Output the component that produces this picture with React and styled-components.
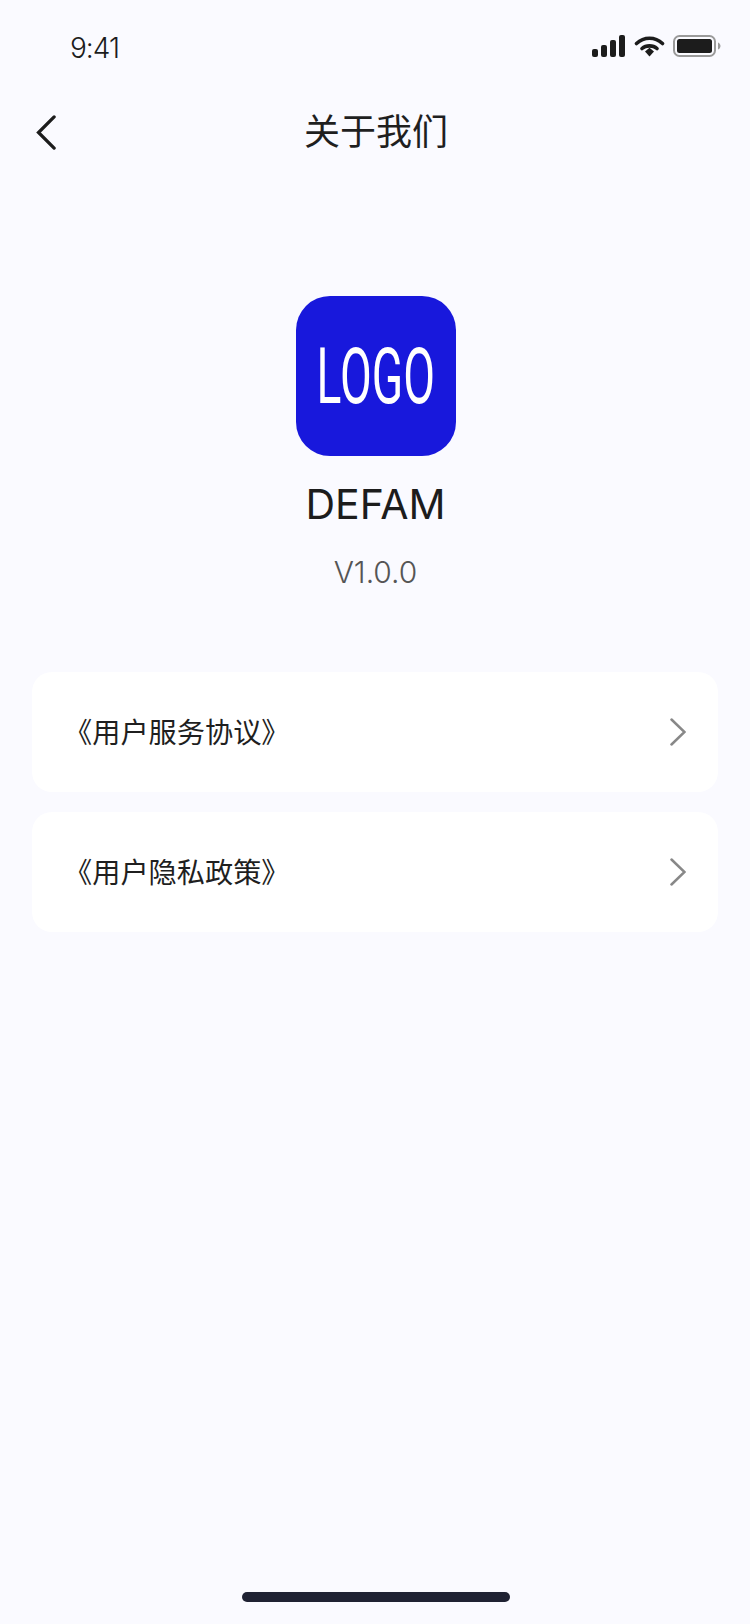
import React from 'react';
import styled, { createGlobalStyle } from 'styled-components';

const GlobalStyle = createGlobalStyle`
  html, body {
    margin: 0;
    padding: 0;
    background: #fafaff;
  }
  * {
    box-sizing: border-box;
  }
`;

const Page = styled.div`
  position: relative;
  width: 750px;
  height: 1624px;
  background: #fafaff;
  color: #1c1c1c;
  font-family: Inter, "Noto Sans CJK SC", sans-serif;
  overflow: hidden;
`;

const StatusBar = styled.div`
  display: flex;
  justify-content: space-between;
  align-items: center;
  height: 88px;
  padding: 6px 29px 0 70px;
`;

const Time = styled.span`
  font-size: 28px;
  font-weight: 300;
  letter-spacing: -1px;
  line-height: 34px;
  padding-top: 2px;
`;

const StatusIcons = styled.div`
  display: flex;
  align-items: center;
  gap: 8px;
  margin-top: -2px;
`;

const NavBar = styled.div`
  display: flex;
  align-items: center;
  justify-content: center;
  position: relative;
  height: 88px;
`;

const BackButton = styled.div`
  position: absolute;
  left: 35px;
  top: 27px;
  display: flex;
`;

const Title = styled.h1`
  margin: 0 0 0 2px;
  font-size: 36px;
  font-weight: 400;
  line-height: 48px;
  color: #1f1f1f;
`;

const Brand = styled.div`
  display: flex;
  flex-direction: column;
  align-items: center;
  padding: 120px 0 0 1px;
`;

const LogoTile = styled.div`
  display: flex;
  align-items: center;
  justify-content: center;
  width: 160px;
  height: 160px;
  padding-top: 3px;
  border-radius: 34px;
  background: #1818dc;
`;

const LogoText = styled.span`
  font-family: Roboto, sans-serif;
  font-size: 77px;
  font-weight: 400;
  line-height: 77px;
  color: #ffffff;
  transform: scaleX(0.6);
`;

const AppName = styled.div`
  margin-top: 22px;
  font-size: 41px;
  font-weight: 400;
  line-height: 52px;
  color: #1c1c1c;
`;

const Version = styled.div`
  margin-top: 23px;
  font-size: 30px;
  font-weight: 300;
  line-height: 38px;
  color: #555555;
`;

const LinkList = styled.div`
  display: flex;
  flex-direction: column;
  gap: 20px;
  padding: 0 32px;
  margin-top: 81px;
`;

const LinkCard = styled.div`
  display: flex;
  align-items: center;
  justify-content: space-between;
  height: 120px;
  padding: 0 32px;
  border-radius: 20px;
  background: #ffffff;
`;

const LinkLabel = styled.span`
  font-size: 28.2px;
  line-height: 40px;
  padding-top: 2px;
  color: #1f1f1f;
`;

const HomeBar = styled.div`
  position: absolute;
  left: 242px;
  bottom: 22px;
  width: 268px;
  height: 10px;
  border-radius: 5px;
  background: #1f2233;
`;

const Chevron = ({ direction, color, width, height, strokeWidth }) => (
  <svg width={width} height={height} viewBox="0 0 16 28" fill="none">
    <path
      d={direction === 'left' ? 'M14.5 1.5 2 14l12.5 12.5' : 'M1.5 1.5 14.5 14 1.5 26.5'}
      stroke={color}
      strokeWidth={strokeWidth}
      strokeLinecap="round"
      strokeLinejoin="miter"
    />
  </svg>
);

const SignalIcon = () => (
  <svg width="34" height="22" viewBox="0 0 34 22" fill="#1c1c1c">
    <rect x="0" y="14" width="6" height="8" rx="2" />
    <rect x="9" y="10" width="6" height="12" rx="2" />
    <rect x="18" y="5" width="6" height="17" rx="2" />
    <rect x="27" y="0" width="6" height="22" rx="2" />
  </svg>
);

const WifiIcon = () => (
  <svg width="31" height="22" viewBox="0 0 30 22" fill="none">
    <path d="M2 8.5C9.5 1.5 20.5 1.5 28 8.5" stroke="#1c1c1c" strokeWidth="3.6" strokeLinecap="round" />
    <path d="M7.5 13.5C11.5 10 18.5 10 22.5 13.5" stroke="#1c1c1c" strokeWidth="3.6" strokeLinecap="round" />
    <path d="M10.5 16.5 15 12.8l4.500 3.700L15 21.500Z" fill="#1c1c1c" />
  </svg>
);

const BatteryIcon = () => (
  <svg width="48" height="22" viewBox="0 0 48 22" fill="none">
    <rect x="1" y="1" width="41" height="20" rx="5.5" stroke="#9a9a9a" strokeWidth="2" />
    <rect x="4" y="4" width="35" height="14" rx="2.5" fill="#1c1c1c" />
    <path d="M45 7.500v7c1.500-.5 2.500-2 2.500-3.500S46.500 8 45 7.500Z" fill="#9a9a9a" />
  </svg>
);

const links = ['《用户服务协议》', '《用户隐私政策》'];

export default function App() {
  return (
    <Page>
      <GlobalStyle />
      <StatusBar>
        <Time>9:41</Time>
        <StatusIcons>
          <SignalIcon />
          <WifiIcon />
          <BatteryIcon />
        </StatusIcons>
      </StatusBar>
      <NavBar>
        <BackButton>
          <Chevron direction="left" color="#1c1c1c" width={22} height={35} strokeWidth={2.6} />
        </BackButton>
        <Title>关于我们</Title>
      </NavBar>
      <Brand>
        <LogoTile>
          <LogoText>LOGO</LogoText>
        </LogoTile>
        <AppName>DEFAM</AppName>
        <Version>V1.0.0</Version>
      </Brand>
      <LinkList>
        {links.map((label) => (
          <LinkCard key={label}>
            <LinkLabel>{label}</LinkLabel>
            <Chevron direction="right" color="#888888" width={16} height={28} strokeWidth={2.5} />
          </LinkCard>
        ))}
      </LinkList>
      <HomeBar />
    </Page>
  );
}
